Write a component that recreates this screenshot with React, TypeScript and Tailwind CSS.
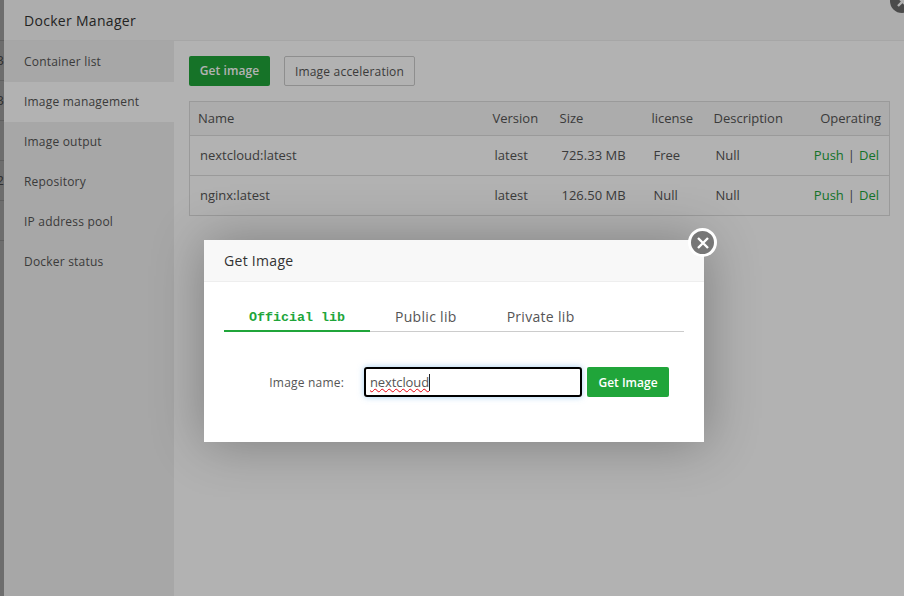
const font = "font-['Open_Sans','Noto_Sans',sans-serif]";

const menu = [
  "Container list",
  "Image management",
  "Image output",
  "Repository",
  "IP address pool",
  "Docker status",
];

const images = [
  { name: "nextcloud:latest", version: "latest", size: "725.33 MB", license: "Free", description: "Null" },
  { name: "nginx:latest", version: "latest", size: "126.50 MB", license: "Null", description: "Null" },
];

// row numbers of the page behind, only their right edge shows
const behind = ["3", "3", "", "2", "", ""];

export default function App() {
  return (
    <div className={`relative flex h-[596px] w-[904px] overflow-hidden bg-white text-[#555] ${font}`}>
      {/* page behind the docker window */}
      <div className="flex w-1 shrink-0 flex-col overflow-hidden bg-[#9d9d9d] pt-10">
        {behind.map((n, i) => (
          <div key={i} className="flex h-10 items-center justify-end border-t border-[#888] text-[13px] text-[#444]">
            <span className="shrink-0">{n}</span>
          </div>
        ))}
      </div>

      <div className="flex min-w-0 flex-1 flex-col">
        <div className="flex h-[41px] shrink-0 items-center border-b border-[#eee] bg-[#f8f8f8] pl-5 text-[#333]">
          <span className="text-[14px] tracking-[0.3px]">Docker Manager</span>
        </div>
        <div className="flex min-h-0 flex-1">
          <ul className="w-[170px] shrink-0 bg-[#f0f0f0] pt-px text-[12px] tracking-[0.2px] text-[#555]">
            {menu.map((item) => (
              <li
                key={item}
                className={`flex h-10 items-center pl-5 ${item === "Image management" ? "bg-white" : ""}`}
              >
                {item}
              </li>
            ))}
          </ul>
          <div className="min-w-0 flex-1 pl-[15px] pt-[15px]">
            <div className="flex gap-[14px]">
              <button className="h-[30px] w-[81px] rounded-[2px] bg-[#20a53a] text-[12px] font-semibold tracking-[0.1px] text-white">
                Get image
              </button>
              <button className="h-[30px] w-[131px] rounded-[2px] border border-[#ccc] bg-white pt-px text-[12px] tracking-[0.2px] text-[#555]">
                Image acceleration
              </button>
            </div>
            <table className="mt-[15px] w-[700px] table-fixed border border-[#ddd] text-[13px]">
              <colgroup>
                <col className="w-[295px]" />
                <col className="w-[67px]" />
                <col className="w-[92px]" />
                <col className="w-[62px]" />
                <col className="w-[104px]" />
                <col className="w-[80px]" />
              </colgroup>
              <thead>
                <tr className="h-[34px] bg-[#f6f6f6] text-left">
                  <th className="pl-2 font-normal">Name</th>
                  <th className="pl-[8px] font-normal">Version</th>
                  <th className="pl-[8px] font-normal">Size</th>
                  <th className="pl-[8px] font-normal">license</th>
                  <th className="pl-[8px] font-normal">Description</th>
                  <th className="pr-2 text-right font-normal">Operating</th>
                </tr>
              </thead>
              <tbody>
                {images.map((image) => (
                  <tr key={image.name} className="h-10 border-t border-[#ddd]">
                    <td className="pl-[10px]">{image.name}</td>
                    <td className="pl-[10px]">{image.version}</td>
                    <td className="pl-[10px]">{image.size}</td>
                    <td className="pl-[10px]">{image.license}</td>
                    <td className="pl-[10px]">{image.description}</td>
                    <td className="pr-[10px] text-right">
                      <span className="text-[#20a53a]">Push</span>
                      <span className="mx-1">|</span>
                      <span className="text-[#20a53a]">Del</span>
                    </td>
                  </tr>
                ))}
              </tbody>
            </table>
          </div>
        </div>
      </div>

      {/* dim layer */}
      <div className="absolute inset-0 bg-black/30" />
      <div className="absolute left-[890px] top-[-11px] flex h-6 w-6 items-center justify-center rounded-full bg-[#4a4a4a]">
        <svg width="13" height="13" viewBox="0 0 13 13" fill="none" stroke="#b2b2b2" strokeWidth="2.4">
          <path d="M2 2l9 9M11 2l-9 9" />
        </svg>
      </div>

      {/* get image dialog */}
      <div className="absolute left-[204px] top-[240px] h-[202px] w-[500px] bg-white shadow-[1px_1px_50px_rgba(0,0,0,0.3)]">
        <div className="flex h-[42px] items-center border-b border-[#eee] bg-[#f8f8f8] pl-5 text-[14px] tracking-[0.3px] text-[#333]">
          Get Image
        </div>
        <div className="px-5 pt-[22px]">
          <div className="flex h-[28px] border-b border-[#ccc] text-[14px] tracking-[0.3px] text-[#555]">
            <div className="h-[28px] w-[146px] border-b-2 border-[#20a53a] pl-[25px] font-['Liberation_Mono',monospace] text-[13.33px] font-bold leading-[28px] tracking-normal text-[#20a53a]">
              Official lib
            </div>
            <div className="ml-[25px] leading-[26px]">Public lib</div>
            <div className="ml-[50px] leading-[26px]">Private lib</div>
          </div>
          <div className="mt-[35px] flex items-center">
            <span className="w-[120px] pt-[2px] text-right text-[12px] tracking-[0.2px] text-[#555]">Image name:</span>
            <div className="ml-5 flex h-[30px] w-[218px] items-center rounded-[3px] border-2 border-black pl-1 pt-px text-[13px] text-[#555] shadow-[0_0_6px_rgba(102,175,233,0.6)]">
              <span className="border-r border-[#222] leading-[17px] tracking-[-0.1px] underline decoration-red-600 decoration-wavy decoration-1">
                nextcloud
              </span>
            </div>
            <button className="ml-[5px] h-[30px] w-[82px] rounded-[2px] bg-[#20a53a] pt-px text-[12px] font-semibold text-white">
              Get Image
            </button>
          </div>
        </div>
        <div className="absolute right-[-13px] top-[-12px] flex h-[29px] w-[29px] items-center justify-center rounded-full border-[3px] border-white bg-[#777]">
          <svg width="14" height="14" viewBox="0 0 14 14" fill="none" stroke="white" strokeWidth="2.4">
            <path d="M2 2l10 10M12 2l-10 10" />
          </svg>
        </div>
      </div>
    </div>
  );
}
